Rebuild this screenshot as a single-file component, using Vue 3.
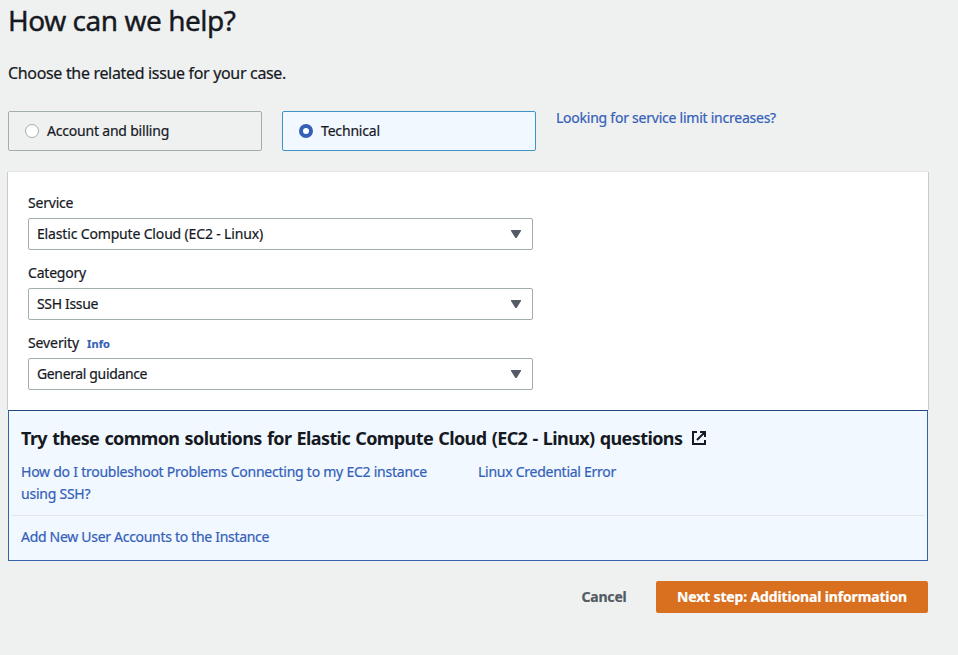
<script setup>
import { ref } from 'vue'

const issueType = ref('technical')
const issueTypes = [
  { id: 'account', label: 'Account and billing', cls: 't-account' },
  { id: 'technical', label: 'Technical', cls: 't-technical' },
]
const fields = [
  { label: 'Service', labelCls: 't-service', value: 'Elastic Compute Cloud (EC2 - Linux)', cls: 't-ec2' },
  { label: 'Category', labelCls: 't-category', value: 'SSH Issue', cls: 't-ssh' },
  { label: 'Severity', labelCls: 't-severity', value: 'General guidance', cls: 't-general', info: true },
]
</script>

<template>
  <main class="page">
    <h1>How can we help?</h1>
    <p class="lead">Choose the related issue for your case.</p>

    <div class="types">
      <button
        v-for="t in issueTypes"
        :key="t.id"
        type="button"
        class="tile"
        :class="{ selected: issueType === t.id }"
        @click="issueType = t.id"
      >
        <span class="radio"></span>
        <span :class="t.cls">{{ t.label }}</span>
      </button>
      <a class="limits">Looking for service limit increases?</a>
    </div>

    <section class="card">
      <div v-for="f in fields" :key="f.label" class="field">
        <div class="label">
          <span :class="f.labelCls">{{ f.label }}</span>
          <a v-if="f.info" class="info">Info</a>
        </div>
        <div class="select">
          <span :class="f.cls">{{ f.value }}</span>
          <svg class="caret" width="10" height="8" viewBox="0 0 10 8"><path d="M0 0h10v1L5.6 8H4.4L0 1z" fill="#545b64" /></svg>
        </div>
      </div>
    </section>

    <section class="solutions">
      <h2>
        <span class="heading">Try these common solutions for Elastic Compute Cloud (EC2 - Linux) questions</span>
        <svg width="14" height="14" viewBox="0 0 14 14" fill="none" stroke="#16191f" stroke-width="2">
          <path d="M5 1H1v12h12V9M8 1h5v5M12.6 1.4 5 9" />
        </svg>
      </h2>
      <div class="row first">
        <a class="t-how">How do I troubleshoot Problems Connecting to my EC2 instance using SSH?</a>
        <a class="t-cred">Linux Credential Error</a>
      </div>
      <div class="row last">
        <a class="t-add">Add New User Accounts to the Instance</a>
      </div>
    </section>

    <div class="actions">
      <button type="button" class="cancel">Cancel</button>
      <button type="button" class="next">Next step: Additional information</button>
    </div>
  </main>
</template>

<style>
body { background: #eff1f1; }
</style>

<style scoped>
.page {
  box-sizing: border-box;
  width: 958px;
  min-height: 655px;
  padding: 2px 30px 0 8px;
  background: #eff1f1;
  color: #16191f;
  font: 400 14px/22px "Noto Sans", sans-serif;
  -webkit-text-stroke-width: 0.2px;
}
h1 { margin: 0; font-size: 28px; font-weight: 400; line-height: 36px; letter-spacing: -0.46px; -webkit-text-stroke-width: 0.4px; }
.lead { margin: 23px 0 0; font-size: 16px; line-height: 24px; letter-spacing: -0.33px; }
a { color: #3460b8; cursor: pointer; }
button { font: inherit; color: inherit; cursor: pointer; }

.types { display: flex; gap: 20px; margin-top: 26px; }
.tile {
  box-sizing: border-box;
  display: flex;
  align-items: center;
  gap: 8px;
  width: 254px;
  height: 40px;
  padding: 0 16px;
  background: transparent;
  border: 1px solid #a2adad;
  border-radius: 2px;
}
.tile.selected { background: #f1f8ff; border-color: #3f94c6; }
.radio {
  box-sizing: border-box;
  width: 14px;
  height: 14px;
  border: 1px solid #a2adad;
  border-radius: 50%;
  background: #fff;
}
.selected .radio { border: 4px solid #3460b8; }
.limits { margin-top: -4px; letter-spacing: -0.24px; }

.card {
  box-sizing: border-box;
  height: 238px;
  margin-top: 21px;
  padding: 20px 20px 0;
  background: #fff;
  box-shadow: 0 -1px 0 #e6e8e8, 1px 0 0 #c9cbcb, -1px 0 0 #c9cbcb;
}
.field + .field { margin-top: 12px; }
.label { display: flex; align-items: center; gap: 8px; height: 22px; margin-bottom: 4px; }
.info { font-size: 11px; font-weight: 700; letter-spacing: 0.1px; padding-top: 1px; }
.select {
  box-sizing: border-box;
  display: flex;
  align-items: center;
  justify-content: space-between;
  width: 505px;
  height: 32px;
  padding: 0 11px 0 8px;
  background: #fff;
  border: 1px solid #a2adad;
  border-radius: 2px;
}

.solutions {
  box-sizing: border-box;
  height: 151px;
  padding: 0 2px;
  background: #f1f8ff;
  border: 1px solid #3463ae;
  border-top-color: #27477f;
}
h2 {
  display: flex;
  align-items: center;
  gap: 10px;
  margin: 0;
  padding: 16px 10px 0;
  font-size: 18px;
  font-weight: 700;
  line-height: 22px;
  white-space: nowrap;
  -webkit-text-stroke-width: 0;
}
.heading { letter-spacing: -0.6px; word-spacing: 1.1px; }
.row { display: grid; grid-template-columns: 1fr 1fr; }
.row a { padding: 0 10px; }
.first { padding: 12px 0 10px; border-bottom: 1px solid #e1e6ea; }
.last { padding-top: 10px; }

.actions { display: flex; justify-content: flex-end; gap: 8px; margin-top: 20px; }
.actions button {
  height: 32px;
  padding: 0;
  border: 0;
  border-radius: 2px;
  font-weight: 700;
}
.actions .cancel { width: 88px; background: transparent; color: #545b64; letter-spacing: -0.2px; }
.actions .next { width: 272px; background: #d87020; color: #fff; letter-spacing: -0.15px; }

.t-account { letter-spacing: -0.2px; }
.t-technical { letter-spacing: -0.17px; }
.t-service { letter-spacing: -0.2px; }
.t-ec2 { letter-spacing: -0.16px; }
.t-category { letter-spacing: -0.2px; }
.t-ssh { letter-spacing: -0.34px; }
.t-severity { letter-spacing: -0.1px; }
.t-general { letter-spacing: -0.36px; }
.t-how { letter-spacing: -0.24px; }
.t-cred { letter-spacing: -0.26px; }
.t-add { letter-spacing: -0.3px; }
</style>
